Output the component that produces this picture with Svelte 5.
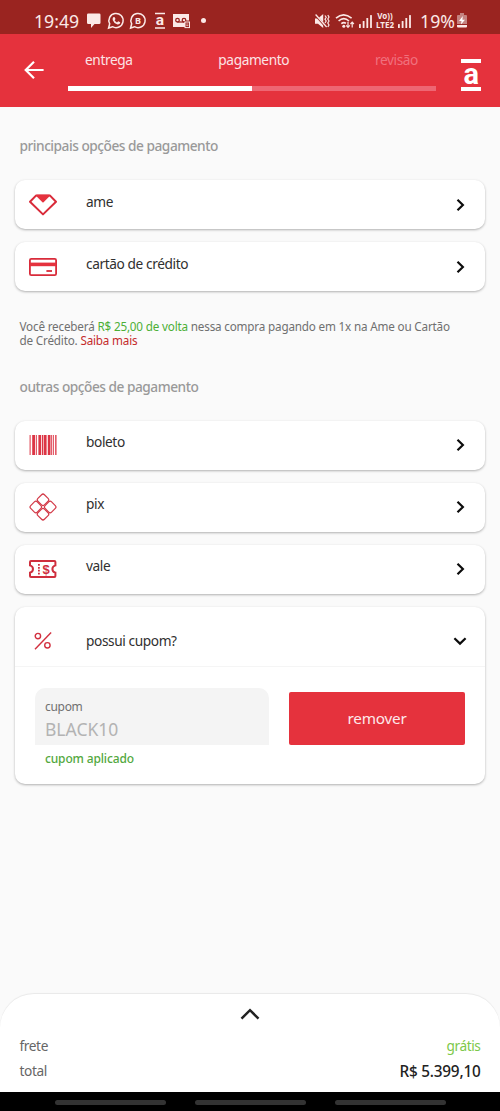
<script lang="ts">
    type Option = { icon: string; label: string };

    const mainOptions: Option[] = [
        { icon: 'ame', label: 'ame' },
        { icon: 'card', label: 'cartão de crédito' },
    ];
    const otherOptions: Option[] = [
        { icon: 'barcode', label: 'boleto' },
        { icon: 'pix', label: 'pix' },
        { icon: 'voucher', label: 'vale' },
    ];
    // x and width of each bar
    const bars = [
        [0.6, 1], [3.2, 2.8], [6.8, 1], [9.4, 2.8], [13, 1], [14.6, 3],
        [18.8, 2.6], [21.8, 1], [23.8, 1], [26.2, 1.3],
    ];
    // centres of the four leaves
    const leaves = [
        [14, 6.8],
        [14, 21.2],
        [6.8, 14],
        [21.2, 14],
    ];
    const signal = [4, 7, 10, 13];

    let progress = 50;
    let isCouponOpen = $state(true);
    const toggleCoupon = () => {
        isCouponOpen = !isCouponOpen;
    };
</script>

{#snippet signalBars()}
    <svg width="14" height="14" viewBox="0 0 14 14">
        {#each signal as h, i}
            <rect x={i * 3.7} y={14 - h} width="1.8" height={h} rx="0.5" fill="#fbe9e7" />
        {/each}
    </svg>
{/snippet}

{#snippet option(item: Option)}
    <button class="card option">
        <span class="icon">
            {#if item.icon === 'ame'}
                <svg width="28" height="22" viewBox="0 0 28 22">
                    <path d="M7.2 1.4h13.6L27 7.8 14 20.4 1 7.8z" fill="none" stroke="#d92b3a" stroke-width="2" stroke-linejoin="round" />
                    <path d="M8 1.6h12L14 7.6z" fill="#e5323e" stroke="#e5323e" stroke-width="1.6" stroke-linejoin="round" />
                </svg>
            {:else if item.icon === 'card'}
                <svg width="28" height="18" viewBox="0 0 28 18">
                    <rect x="0.9" y="0.9" width="26.2" height="16.2" rx="1.4" fill="none" stroke="#d92b3a" stroke-width="1.8" />
                    <path d="M1 6.4h26" stroke="#e5323e" stroke-width="3.6" />
                    <path d="M17.4 13h5.6" stroke="#d92b3a" stroke-width="1.8" />
                </svg>
            {:else if item.icon === 'barcode'}
                <svg width="28" height="20" viewBox="0 0 28 20">
                    {#each bars as [x, w]}
                        <rect {x} y="0" width={w} height="20" fill="#dc3545" />
                    {/each}
                </svg>
            {:else if item.icon === 'pix'}
                <svg width="28" height="28" viewBox="0 0 28 28">
                    <g fill="none" stroke="#d33a48" stroke-width="1.2">
                        {#each leaves as [x, y]}
                            <rect x="-4.6" y="-4.6" width="9.2" height="9.2" rx="2" transform="translate({x} {y}) rotate(45)" />
                        {/each}
                    </g>
                </svg>
            {:else}
                <svg width="28" height="18" viewBox="0 0 28 18">
                    <path d="M2 1h23.4q1 0 1 1v3.4q-3 .8-3 3.6t3 3.6V16q0 1-1 1H2q-1 0-1-1v-3.4Q4 11.8 4 9T1 5.4V2q0-1 1-1z" fill="none" stroke="#cf2f3e" stroke-width="2" />
                    <path d="M9.9 4v10.5" stroke="#cf2f3e" stroke-width="1.8" stroke-dasharray="1.8 1.1" />
                    <text x="17.2" y="13.6" text-anchor="middle" class="dollar">$</text>
                </svg>
            {/if}
        </span>
        <span class="label">{item.label}</span>
        <svg class="chevron" width="14" height="14" viewBox="0 0 14 14">
            <path d="M4.5 1.7L9.9 7l-5.4 5.3" fill="none" stroke="#0c0c0c" stroke-width="2.2" />
        </svg>
    </button>
{/snippet}

<div class="screen">
    <div class="status">
        <span class="clock">19:49</span>
        <svg width="103" height="18" viewBox="0 0 103 18">
            <path d="M1.2 1.5h11q1.3 0 1.3 1.3v8q0 1.3-1.3 1.3H7.500L4 16v-3.900H1.200Q0 12.100 0 10.800v-8q0-1.300 1.200-1.300z" fill="#fbe9e7" />
            <g fill="none" stroke="#fbe9e7" stroke-width="1.5">
                <path d="M21.600 16l1.100-4.200a7.100 7.100 0 1 1 2.800 2.900z" />
                <path d="M43.600 16l1.100-4.200a7.100 7.100 0 1 1 2.800 2.900z" />
            </g>
            <path d="M26.200 5.200l1.300-.3 1 2-.9 1.300q.8 1.500 2.400 2.200l1.200-1.100 2 1-.2 1.300q-1.200 1.200-3 .6-3.300-1.200-4.300-4.300-.3-1.700.5-2.700z" fill="#fbe9e7" />
            <text x="51" y="12" class="badge-b">B</text>
            <path d="M68 1.600h10M68 16h10" stroke="#fbe9e7" stroke-width="1.500" />
            <text x="73" y="13.400" class="badge-a">a</text>
            <path d="M86 2h16v6.500h-3.600v6.500H86z" fill="#fbe9e7" />
            <g fill="none" stroke="#9a2420" stroke-width="1.300">
                <circle cx="90.500" cy="8.200" r="1.800" />
                <circle cx="97" cy="8.200" r="1.800" />
                <path d="M90.500 10h6.500" />
            </g>
            <rect x="98" y="10" width="4.500" height="5.600" fill="#9a2420" stroke="#fbe9e7" stroke-width="1" />
            <path d="M99.200 12h2.200M99.200 13.600h2.200" stroke="#fbe9e7" stroke-width=".7" />
        </svg>
        <span class="dot"></span>
        <div class="system">
            <svg width="16" height="16" viewBox="0 0 16 16">
                <path d="M1 5.500h3L9.200 1v14L4 10.800H1z" fill="#fbe9e7" />
                <path d="M1 1.500l11 12.500" stroke="#9a2420" stroke-width="2" />
                <path d="M1.600 1.500l11 12.500" stroke="#fbe9e7" stroke-width="1.300" />
                <path d="M11 2.500l1.200 1.800L11 6.200 12.200 8 11 10M13.800 2l1.200 2-1.200 2L15 8l-1.200 2 1.200 2-1.200 2" fill="none" stroke="#fbe9e7" stroke-width="1.200" />
            </svg>
            <svg class="wifi" width="20" height="16" viewBox="0 0 20 16">
                <g fill="none" stroke="#fbe9e7" stroke-width="1.600">
                    <path d="M1 5.200q7.500-6.600 15.600 0M3.600 8q5.200-4.600 10.400 0M6.300 10.700q2.600-2.100 4.600-.3" />
                    <path d="M13 8.800v5.400M11.200 12.400l1.800 1.900 1.800-1.900M17.200 14.500V9.400M15.500 11l1.700-1.800 1.700 1.800" stroke-width="1.200" />
                </g>
                <circle cx="8.800" cy="13.200" r="1.500" fill="#fbe9e7" />
            </svg>
            {@render signalBars()}
            <span class="volte"><span class="vo">Vo))</span><span>LTE2</span></span>
            {@render signalBars()}
            <span class="percent">19%</span>
            <svg width="10" height="15" viewBox="0 0 10 15">
                <path d="M3 0h4v2h2q1 0 1 1v8H0V3q0-1 1-1h2z" fill="#c48380" />
                <path d="M0 12h10v1.500q0 1-1 1H1q-1 0-1-1z" fill="#fbe9e7" />
                <path d="M5.800 3L2 8h2.500l-.6 3.500L8 6.700H5.400z" fill="#fff" />
            </svg>
        </div>
    </div>

    <header>
        <svg class="back" width="20" height="18" viewBox="0 0 20 18">
            <path d="M19.600 9H1.600M10 .8L1.700 9l8.300 8.200" fill="none" stroke="#fff" stroke-width="2.200" />
        </svg>
        <div class="steps">
            <div class="step-labels">
                <span>entrega</span>
                <span>pagamento</span>
                <span class="pending">revisão</span>
            </div>
            <div class="track"><div class="fill" style="width: {progress}%"></div></div>
        </div>
        <div class="logo"><span>a</span></div>
    </header>

    <main>
        <h2>principais opções de pagamento</h2>
        <div class="list">
            {#each mainOptions as item}
                {@render option(item)}
            {/each}
        </div>
        <p class="note">
            Você receberá <span class="cashback">R$ 25,00 de volta</span> nessa compra pagando em 1x na Ame ou Cartão<br />
            de Crédito. <span class="more">Saiba mais</span>
        </p>
        <h2>outras opções de pagamento</h2>
        <div class="list">
            {#each otherOptions as item}
                {@render option(item)}
            {/each}
            <section class="card coupon">
                <button class="coupon-head" onclick={toggleCoupon}>
                    <span class="icon">
                        <svg width="18" height="18" viewBox="0 0 18 18">
                            <g fill="none" stroke="#d2303f" stroke-width="1.400">
                                <circle cx="3.900" cy="4.100" r="2.700" />
                                <circle cx="13.400" cy="13.300" r="2.700" />
                                <path d="M17.100.600L1 17.300" />
                            </g>
                        </svg>
                    </span>
                    <span class="label">possui cupom?</span>
                    <svg class="chevron" width="14" height="14" viewBox="0 0 14 14">
                        <path d="M1.400 4.200L7 9.600l5.600-5.400" fill="none" stroke="#0c0c0c" stroke-width="2.200" />
                    </svg>
                </button>
                {#if isCouponOpen}
                    <div class="coupon-body">
                        <div class="field">
                            <div class="input">
                                <span class="field-label">cupom</span>
                                <span class="code">BLACK10</span>
                            </div>
                            <span class="applied">cupom aplicado</span>
                        </div>
                        <button class="remove">remover</button>
                    </div>
                {/if}
            </section>
        </div>
    </main>

    <footer>
        <svg class="expand" width="20" height="12" viewBox="0 0 20 12">
            <path d="M1.500 10.600L10 2.200l8.500 8.400" fill="none" stroke="#222" stroke-width="2.500" />
        </svg>
        <div class="line">
            <span>frete</span>
            <span class="free">grátis</span>
        </div>
        <div class="line">
            <span>total</span>
            <span class="total">R$ 5.399,10</span>
        </div>
    </footer>
    <nav>
        <span></span>
        <span></span>
        <span></span>
    </nav>
</div>

<style>
    :global(body) {
        background: #fafafa;
    }

    .screen {
        display: flex;
        flex-direction: column;
        width: 500px;
        height: 1111px;
        overflow: hidden;
        background: #fafafa;
        font-family: 'Noto Sans', sans-serif;
        font-size: 13.7px;
        letter-spacing: -0.4px;
        color: #303030;
    }

    svg {
        display: block;
        flex: none;
    }

    button {
        border: 0;
        padding: 0;
        font: inherit;
        letter-spacing: inherit;
        color: inherit;
        text-align: left;
    }

    .status {
        display: flex;
        align-items: center;
        height: 34px;
        padding: 7px 33px 0 34px;
        box-sizing: border-box;
        background: #9a2420;
        color: #fbe9e7;
        letter-spacing: 0;
    }

    .clock,
    .percent {
        font-size: 17.7px;
        line-height: 20px;
    }

    .clock {
        width: 53px;
    }

    .badge-b {
        font-size: 9px;
        font-weight: 700;
        text-anchor: middle;
        fill: #fbe9e7;
    }

    .badge-a {
        font-family: Roboto, sans-serif;
        font-size: 15.5px;
        font-weight: 700;
        text-anchor: middle;
        fill: #fbe9e7;
    }

    .dot {
        width: 5px;
        height: 5px;
        margin-left: 11px;
        border-radius: 50%;
        background: #fbe9e7;
    }

    .system {
        display: flex;
        align-items: center;
        margin-left: auto;
    }

    .wifi {
        margin: 0 4px 0 5px;
    }

    .volte {
        display: flex;
        flex-direction: column;
        align-items: center;
        width: 20px;
        margin: 0 3px 0 2px;
        font-size: 8px;
        font-weight: 700;
        line-height: 9px;
    }

    .volte .vo {
        line-height: 8px;
    }

    .percent {
        margin: 0 2px 0 8px;
    }

    header {
        display: flex;
        height: 72.5px;
        box-sizing: border-box;
        background: #e5323d;
        color: #fff;
    }

    .back {
        margin: 27px 0 0 24px;
    }

    .steps {
        width: 368px;
        margin-left: 24px;
    }

    .step-labels {
        display: flex;
        justify-content: space-between;
        padding: 17px 18px 0 17px;
        line-height: 18px;
        color: #fce3e5;
    }

    .step-labels .pending {
        color: #f0717e;
    }

    .track {
        height: 5px;
        margin-top: 17px;
        background: #ee6673;
    }

    .fill {
        height: 100%;
        background: #fff;
    }

    .logo {
        display: flex;
        justify-content: center;
        width: 20px;
        height: 32px;
        margin: 25px 0 0 25px;
        box-sizing: border-box;
        border-top: 4px solid #fff;
        border-bottom: 4px solid #fff;
        font: 700 29px/22px Roboto, sans-serif;
    }

    main {
        flex: 1;
        padding: 29.5px 15px 0;
    }

    h2 {
        margin: 0 0 24px 4.5px;
        font-size: 13.7px;
        font-weight: 500;
        line-height: 20px;
        letter-spacing: -0.48px;
        color: #999;
    }

    .list {
        display: flex;
        flex-direction: column;
        gap: 13.1px;
    }

    .card {
        width: 470px;
        border-radius: 10px;
        background: #fff;
        box-shadow: 0 1px 2.5px rgba(0, 0, 0, 0.3);
    }

    .option {
        display: flex;
        align-items: center;
        height: 49px;
    }

    .icon {
        display: flex;
        justify-content: center;
        width: 28px;
        margin: 0 29px 0 14px;
    }

    .dollar {
        font-family: 'Liberation Sans', sans-serif;
        font-size: 13px;
        font-weight: 700;
        letter-spacing: 0;
        fill: #cf2f3e;
    }

    .label {
        flex: 1;
    }

    .option .label {
        padding-bottom: 7px;
    }

    .chevron {
        margin-right: 18px;
    }

    .note {
        margin: 27.5px 0 30px 4.5px;
        font-size: 11.7px;
        line-height: 14px;
        letter-spacing: -0.18px;
        white-space: nowrap;
        color: #707070;
    }

    .cashback {
        color: #4caf36;
    }

    .more {
        color: #c42b2b;
    }

    .coupon {
        height: 177.5px;
    }

    .coupon-head {
        display: flex;
        align-items: center;
        width: 100%;
        height: 60px;
        padding-top: 9px;
        border-bottom: 1px solid #f5f5f5;
        background: none;
    }

    .coupon-body {
        display: flex;
        gap: 20px;
        padding: 21px 20px 0;
    }

    .input {
        display: flex;
        flex-direction: column;
        width: 234px;
        height: 57px;
        padding: 9px 10px 0;
        box-sizing: border-box;
        border-radius: 10px 10px 0 0;
        background: #f4f4f4;
    }

    .field-label {
        font-size: 12px;
        line-height: 19px;
        letter-spacing: -0.3px;
        color: #707070;
    }

    .code {
        font-size: 17.5px;
        line-height: 26px;
        letter-spacing: 0;
        color: #b3b3b3;
    }

    .applied {
        display: block;
        padding: 4px 10px 0;
        font-size: 12px;
        font-weight: 500;
        line-height: 19px;
        letter-spacing: -0.15px;
        color: #52a840;
    }

    .remove {
        width: 177px;
        height: 53px;
        margin-top: 4px;
        border-radius: 2px;
        background: #e5323d;
        color: #fde8ea;
        font-size: 15.3px;
        letter-spacing: -0.2px;
        text-align: center;
    }

    footer {
        height: 98px;
        padding: 14px 19.5px 0;
        box-sizing: border-box;
        border-radius: 34px 34px 0 0;
        background: #fff;
        box-shadow: 0 -1px 1px rgba(0, 0, 0, 0.07);
    }

    .expand {
        margin: 0 auto 14px 220px;
    }

    .line {
        display: flex;
        justify-content: space-between;
        line-height: 24.5px;
        color: #666;
    }

    .line .free {
        color: #7cc84a;
    }

    .line .total {
        font-size: 15.3px;
        font-weight: 500;
        letter-spacing: -0.2px;
        color: #222;
    }

    nav {
        display: flex;
        justify-content: center;
        gap: 29px;
        height: 19px;
        padding-top: 7.5px;
        box-sizing: border-box;
        background: #000;
    }

    nav span {
        width: 111px;
        height: 5px;
        border-radius: 3px;
        background: #333;
    }
</style>
